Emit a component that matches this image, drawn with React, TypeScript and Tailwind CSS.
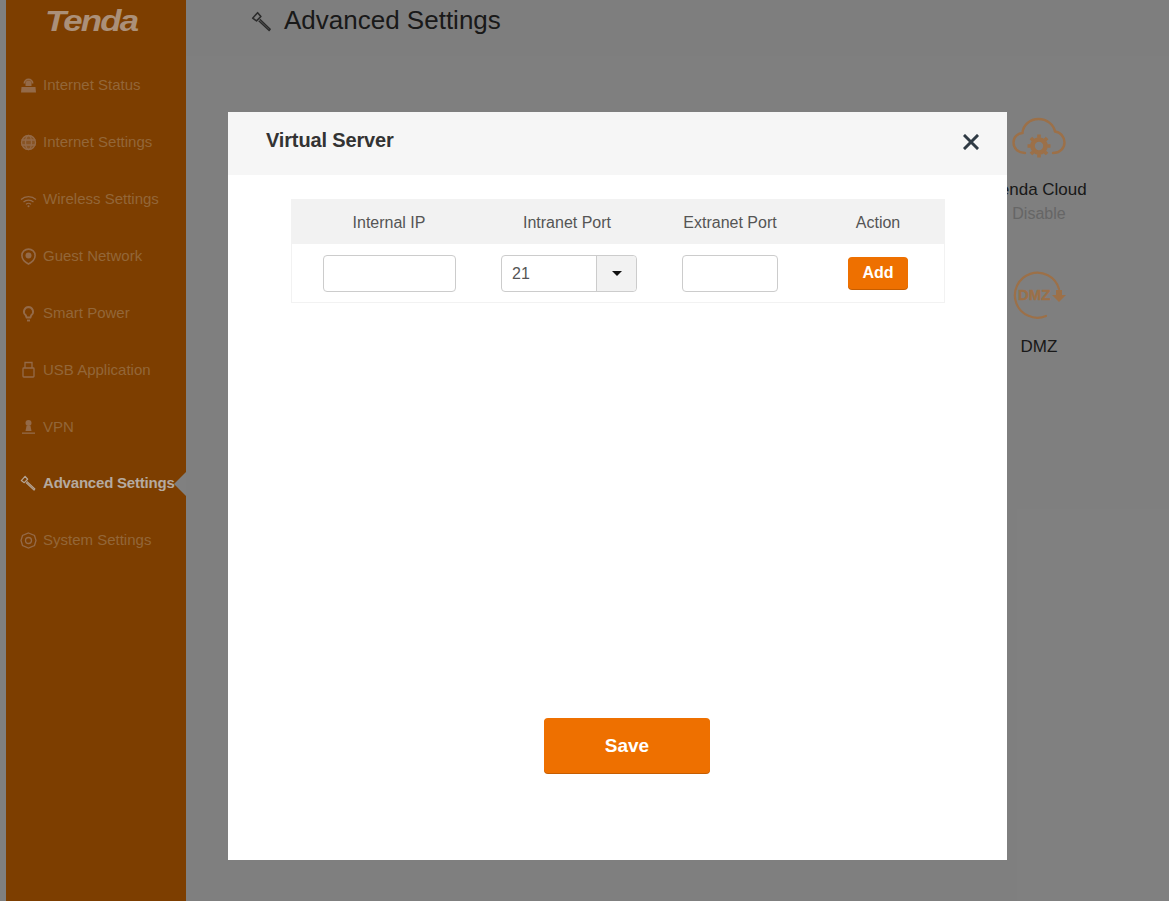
const items = [
  ["Internet Status", "router"],
  ["Internet Settings", "globe"],
  ["Wireless Settings", "wifi"],
  ["Guest Network", "guest"],
  ["Smart Power", "bulb"],
  ["USB Application", "usb"],
  ["VPN", "vpn"],
  ["Advanced Settings", "tool"],
  ["System Settings", "gear"],
];

function Tool({ className = "" }: { className?: string }) {
  return (
    <svg viewBox="0 0 20 20" className={className} fill="none" stroke="currentColor">
      <path d="M1.5 6.5 L6 1.5 L9 5 L5 9 Z" strokeWidth="1.4" strokeLinejoin="round" />
      <path d="M8 7.5 L17.5 16.5 L16.5 17.8 L7 8.8" strokeWidth="1.3" strokeLinejoin="round" />
    </svg>
  );
}

function SideIcon({ name }: { name: string }) {
  const c = "w-[17px] h-[17px] text-[#946a48]";
  switch (name) {
    case "router":
      return (
        <svg viewBox="0 0 17 17" className={c} fill="currentColor">
          <path d="M3.5 6.5a5 5 0 0 1 10 0h-1.8a3.2 3.2 0 0 0-6.4 0z" />
          <path d="M5.5 6.5a3 3 0 0 1 6 0V9h-6z" />
          <path d="M1.5 10h14l.5 5.5H1z" />
        </svg>
      );
    case "globe":
      return (
        <svg viewBox="0 0 17 17" className={c} fill="none" stroke="currentColor" strokeWidth="1.3">
          <circle cx="8.5" cy="8.5" r="7" fill="currentColor" fillOpacity="0.5" />
          <ellipse cx="8.5" cy="8.5" rx="3" ry="7" />
          <path d="M1.5 6h14M1.5 11h14" />
        </svg>
      );
    case "wifi":
      return (
        <svg viewBox="0 0 17 17" className={c} fill="none" stroke="currentColor" strokeWidth="1.2">
          <path d="M1 8.5a11 11 0 0 1 15 0M3.5 11a7.5 7.5 0 0 1 10 0M6 13.3a3.5 3.5 0 0 1 5 0" />
          <circle cx="8.5" cy="15.3" r="1" fill="currentColor" stroke="none" />
        </svg>
      );
    case "guest":
      return (
        <svg viewBox="0 0 17 17" className={c} fill="none" stroke="currentColor" strokeWidth="1.6">
          <path d="M8.5 16 C4 13.5 1.9 11 1.9 7.4 a6.6 6.3 0 0 1 13.2 0 C15.1 11 13 13.5 8.5 16z" />
          <circle cx="8.5" cy="7.5" r="3" fill="currentColor" stroke="none" />
        </svg>
      );
    case "bulb":
      return (
        <svg viewBox="0 0 17 17" className={c} fill="none" stroke="currentColor" strokeWidth="1.9">
          <path d="M8.5 2a4.6 4.6 0 0 1 2.8 8.2 L10.4 12.5h-3.8l-.9-2.3A4.6 4.6 0 0 1 8.5 2z" />
          <path d="M7 15.5h3" />
        </svg>
      );
    case "usb":
      return (
        <svg viewBox="0 0 17 17" className={c} fill="none" stroke="currentColor" strokeWidth="1.3">
          <rect x="3" y="7" width="11" height="9" rx="0.8" />
          <path d="M5 7V1.5h7V7" />
        </svg>
      );
    case "vpn":
      return (
        <svg viewBox="0 0 17 17" className={c} fill="currentColor">
          <circle cx="8.5" cy="5" r="3" />
          <path d="M6.5 8h4l1 5h-6z" />
          <rect x="2" y="14.5" width="13" height="1.3" />
        </svg>
      );
    case "tool":
      return <Tool className="h-[17px] w-[17px] text-[#b5a596]" />;
    default:
      return (
        <svg viewBox="0 0 17 17" className={c} fill="none" stroke="currentColor" strokeWidth="1.3">
          <path d="M8.5 1 L14.5 3.5 L16 8.5 L14.5 13.5 L8.5 16 L2.5 13.5 L1 8.5 L2.5 3.5 Z" />
          <circle cx="8.5" cy="8.5" r="3" />
        </svg>
      );
  }
}

function Cloud() {
  return (
    <svg viewBox="0 0 54 44" className="relative z-10 h-[44px] w-[54px] text-[#9c7048]" fill="none" stroke="currentColor">
      <path d="M13 36 C6 36 1.5 31 1.5 25.5 C1.5 20 5.5 16.5 10.5 16 C11 8 18 2 26.5 2 C35 2 41.5 7.5 43 14.5 C48.5 15 52.5 20 52.5 25.5 C52.5 31 48 36 41 36" strokeWidth="2.4" strokeLinecap="round" />
      <circle cx="27" cy="29" r="6.5" strokeWidth="4.6" />
      <path d="M27 17.5v23M15.500 29h23M18.900 20.900l16.200 16.200M35.100 20.900L18.900 37.100" strokeWidth="3.600" strokeDasharray="3.200 16.600" />
    </svg>
  );
}

function Dmz() {
  return (
    <svg viewBox="0 0 54 50" className="relative z-10 h-[50px] w-[54px] text-[#9c7048]" fill="none" stroke="currentColor">
      <path d="M34 47 A22.5 22.5 0 1 1 47 20" strokeWidth="2.2" strokeLinecap="round" />
      <text x="6" y="31" fontSize="15" fontWeight="700" fill="currentColor" stroke="currentColor" strokeWidth="0.4" fontFamily="Liberation Sans, sans-serif">DMZ</text>
      <path d="M44 21h6v5h4l-7 7-7-7h4z" fill="currentColor" stroke="none" />
    </svg>
  );
}

export default function App() {
  return (
    <div className="relative h-[901px] w-full overflow-hidden bg-white font-['Liberation_Sans',Arial,sans-serif]">
      <div className="flex h-full pl-[6px]">
        <aside className="w-[180px] shrink-0 bg-[#fb7d00]">
          <div className="relative z-10 h-[57px] pl-[39px] pt-[3px] text-[29px] leading-[36px] font-bold italic text-[#ab9079]">
            <span className="inline-block origin-left scale-x-[1.2] tracking-[-1.5px]">Tenda</span>
          </div>
          <nav className="relative z-10">
            {items.map(([label, icon]) => {
              const active = label === "Advanced Settings";
              return (
                <div key={label} className="relative flex h-[56.9px] items-center gap-[6px] pl-[14px]">
                  <SideIcon name={icon} />
                  <span className={active ? "text-[15px] font-bold tracking-[-0.2px] text-[#b5aaa0] whitespace-nowrap" : "text-[15px] text-[#936638] whitespace-nowrap"}>
                    {label}
                  </span>
                  {active && (
                    <span className="absolute right-0 top-1/2 h-0 w-0 -translate-y-1/2 border-y-[12px] border-r-[12px] border-y-transparent border-r-[#808080]" />
                  )}
                </div>
              );
            })}
          </nav>
        </aside>
        <main className="flex-1">
          <header className="flex h-[56px] items-start gap-[11px] bg-[#fcfcfc] pl-[65px] pt-[4px] text-[#333]">
            <Tool className="mt-[7px] h-[22px] w-[22px] text-[#555]" />
            <h1 className="text-[26px] leading-[32px] font-normal">Advanced Settings</h1>
          </header>
          <div className="flex justify-end pr-[65px] pt-[61px]">
            <div className="flex w-[130px] flex-col items-center text-center">
              <Cloud />
              <div className="mt-[19px] text-[17px] leading-[20px] text-[#333] whitespace-nowrap">Tenda Cloud</div>
              <div className="mt-[5px] text-[16px] leading-[18px] text-[#ccc]">Disable</div>
              <div className="mt-[46px]"><Dmz /></div>
              <div className="mt-[18px] text-[17px] leading-[20px] text-[#333]">DMZ</div>
            </div>
          </div>
        </main>
      </div>

      <div className="absolute inset-0 bg-black/50 pl-[228px] pt-[112px]">
        <div className="relative z-20 flex h-[748px] w-[779px] flex-col bg-white">
          <div className="flex h-[63px] items-start justify-between bg-[#f6f6f6] pl-[38px] pr-[28px]">
            <h2 className="pt-[14px] text-[20px] leading-[28px] font-bold tracking-[-0.15px] text-[#333]">Virtual Server</h2>
            <svg viewBox="0 0 16 16" className="mt-[22px] h-[16px] w-[16px] text-[#2f3a44]" stroke="currentColor" strokeWidth="3" strokeLinecap="square">
              <path d="M2 2l12 12M14 2L2 14" />
            </svg>
          </div>
          <div className="flex-1 px-[63px] pt-[24px]">
            <div className="w-[654px] border-x border-b border-[#f2f2f2]">
              <div className="grid h-[45px] grid-cols-[194px_162px_164px_132px] items-center bg-[#f2f2f2] pt-[2px] text-center text-[16px] text-[#555]">
                <div>Internal IP</div>
                <div>Intranet Port</div>
                <div>Extranet Port</div>
                <div>Action</div>
              </div>
              <div className="grid h-[58px] grid-cols-[194px_162px_164px_132px] items-center">
                <div className="flex justify-center">
                  <div className="h-[37px] w-[133px] rounded-[4px] border border-[#ccc] bg-white" />
                </div>
                <div className="flex justify-start pl-[15px]">
                  <div className="flex h-[37px] w-[136px] rounded-[4px] border border-[#ccc] bg-white">
                    <div className="flex-1 pl-[10px] text-[16px] leading-[35px] text-[#555]">21</div>
                    <div className="flex w-[40px] items-center justify-center rounded-r-[4px] border-l border-[#ccc] bg-[#f2f2f2]">
                      <span className="h-0 w-0 border-x-[5px] border-t-[5px] border-x-transparent border-t-[#111]" />
                    </div>
                  </div>
                </div>
                <div className="flex justify-center">
                  <div className="h-[37px] w-[96px] rounded-[4px] border border-[#ccc] bg-white" />
                </div>
                <div className="flex justify-center">
                  <button className="h-[32px] w-[60px] rounded-[4px] bg-[#ee7000] text-[16px] font-bold text-[#fff] shadow-[0_1px_0_#c65d00]">Add</button>
                </div>
              </div>
            </div>
          </div>
          <div className="flex justify-center pb-[87px] pl-[18px]">
            <button className="h-[55px] w-[166px] rounded-[4px] bg-[#ee7000] pl-[1px] pt-[1px] text-[19px] font-bold text-white shadow-[0_1px_0_#c65d00]">Save</button>
          </div>
        </div>
      </div>
    </div>
  );
}
